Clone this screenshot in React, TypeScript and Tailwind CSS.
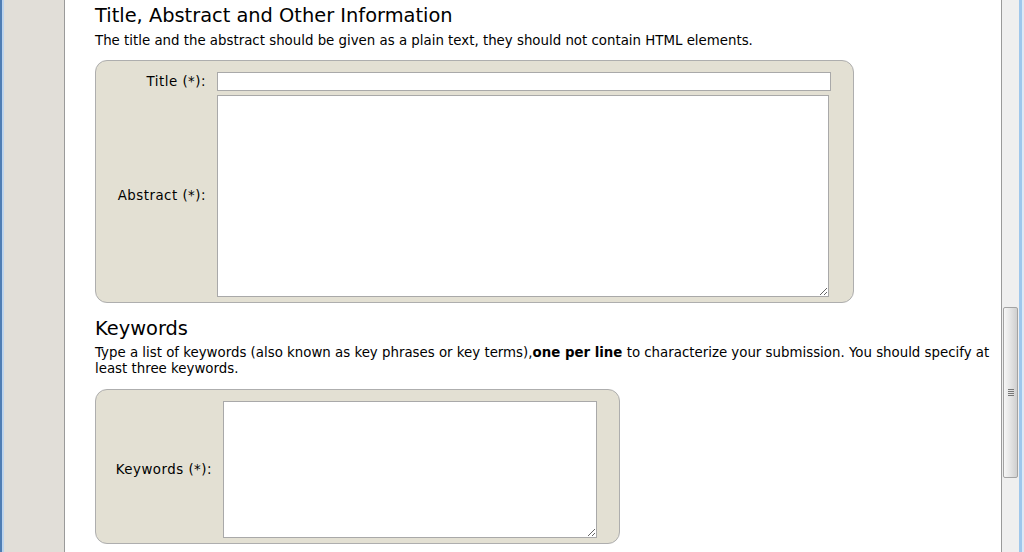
import React from "react";

const font = { fontFamily: '"DejaVu Sans", Verdana, sans-serif' };

export default function App() {
  return (
    <div className="flex h-[552px] w-[1024px] overflow-hidden bg-white text-black" style={font}>
      {/* left window frame */}
      <div className="w-[2px] shrink-0 bg-[#4f7db3]" />
      <div className="w-[2px] shrink-0 bg-[#bcd4ee]" />
      {/* sidebar */}
      <div className="w-[61px] shrink-0 border-r border-[#9a9a9a] bg-[#e1ded8]" />
      {/* content */}
      <div className="flex-1 min-w-0 pl-[30px] pr-[10px]">
        <h2 className="mt-[4px] text-[19.4px] leading-[24px] font-normal">
          Title, Abstract and Other Information
        </h2>
        <p className="mt-[5px] text-[13.35px] leading-[16px]">
          The title and the abstract should be given as a plain text, they should not contain HTML elements.
        </p>
        <div className="mt-[11px] w-[759px] rounded-[12px] border border-[#aeaeae] bg-[#e3e0d3] pt-[11px] pb-[5px]">
          <div className="flex items-center">
            <div className="w-[110px] shrink-0 text-right text-[13.35px] leading-[16px] tracking-[0.5px]">Title (*):</div>
            <input
              type="text"
              className="ml-[11px] h-[19px] w-[614px] border border-[#a9a9a9] bg-white outline-none"
            />
          </div>
          <div className="mt-[4px] flex items-center">
            <div className="w-[110px] shrink-0 text-right text-[13.35px] leading-[16px] tracking-[0.5px]">Abstract (*):</div>
            <textarea className="ml-[11px] block h-[202px] w-[612px] border border-[#a9a9a9] bg-white outline-none" />
          </div>
        </div>

        <h2 className="mt-[14px] text-[19.4px] leading-[24px] font-normal">Keywords</h2>
        <p className="mt-[4px] text-[13.35px] leading-[16px]">
          Type a list of keywords (also known as key phrases or key terms),<b>one per line</b> to characterize your
          submission. You should specify at least three keywords.
        </p>
        <div className="mt-[12px] w-[525px] rounded-[12px] border border-[#aeaeae] bg-[#e3e0d3] pt-[11px] pb-[5px]">
          <div className="flex items-center">
            <div className="w-[116px] shrink-0 text-right text-[13.35px] leading-[16px] tracking-[0.5px]">Keywords (*):</div>
            <textarea className="ml-[11px] block h-[137px] w-[374px] border border-[#a9a9a9] bg-white outline-none" />
          </div>
        </div>
      </div>
      {/* scrollbar */}
      <div className="relative w-[18px] shrink-0 border-l border-[#9a9a9a] bg-[#efefef]">
        <div className="absolute left-[1px] top-[307px] flex h-[171px] w-[15px] items-center justify-center rounded-[2px] border border-[#a3a3a3] bg-gradient-to-r from-[#f6f6f6] via-[#e4e4e4] to-[#cfcfcf]">
          <div className="flex flex-col gap-[1px]">
            <div className="h-[1px] w-[6px] bg-[#777]" />
            <div className="h-[1px] w-[6px] bg-[#777]" />
            <div className="h-[1px] w-[6px] bg-[#777]" />
            <div className="h-[1px] w-[6px] bg-[#777]" />
          </div>
        </div>
      </div>
      {/* right window frame */}
      <div className="w-[3px] shrink-0 bg-[#9fc7ec]" />
      <div className="w-[2px] shrink-0 bg-[#dce9f6]" />
    </div>
  );
}
